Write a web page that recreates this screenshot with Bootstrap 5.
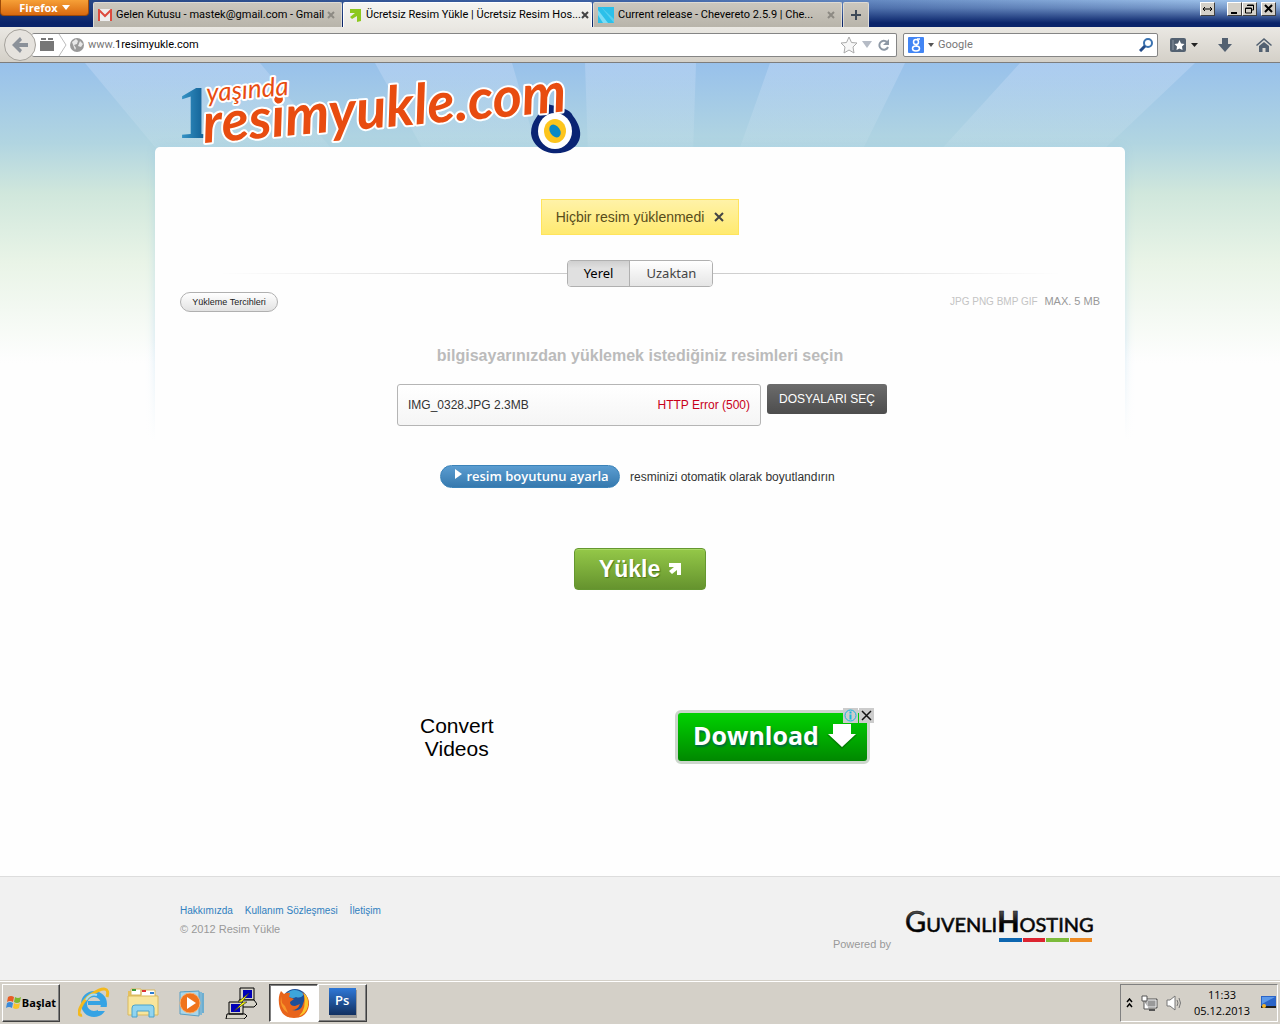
<!DOCTYPE html>
<html lang="tr">
<head>
<meta charset="utf-8">
<meta name="viewport" content="width=device-width, initial-scale=1">
<title>Ücretsiz Resim Yükle</title>
<link href="https://cdn.jsdelivr.net/npm/bootstrap@5.3.0/dist/css/bootstrap.min.css" rel="stylesheet">
<style>
body{font-family:"Liberation Sans",sans-serif;font-size:12px;line-height:18px;color:#333;background:#fefefe}
.ui{font-family:Roboto,"DejaVu Sans",sans-serif;font-size:11px;line-height:16px;color:#000}
svg{display:block;flex:none}
button{font-family:inherit}
/* browser window */
.titlebar{height:27px;background:linear-gradient(to bottom,rgba(10,36,106,0) 0,rgba(10,36,106,.25) 30%,#0a246a 85%),linear-gradient(to right,#23427f,#4166a8 50%,#a6caf0)}
.fx-btn{width:89px;height:16px;background:linear-gradient(#f6a037,#d9690f);border:1px solid #9c4a0a;border-top:0;border-radius:0 0 4px 4px;color:#fff;font-family:"Open Sans",sans-serif;font-weight:700;font-size:11px;line-height:14px;padding:0}
.tabitem{flex:0 1 249px;min-width:0;height:25px;background:linear-gradient(#cbc7be,#b8b4aa);border:1px solid #dedbd4;border-bottom:0;border-radius:2px 2px 0 0;padding:0 6px 0 4px}
.tabitem.sel{background:linear-gradient(#f5f4f1,#eae8e3);border-color:#fff}
.tabitem.plus{flex:0 0 26px;padding:0}
.tabitem button,.bare{border:0;background:none;padding:0;color:inherit}
.wbtn{width:15px;height:14px;background:#d4d0c8;border:1px solid;border-color:#fff #404040 #404040 #fff;padding:0}
.toolbar{height:36px;background:linear-gradient(#eae8e3,#d4d0c8);border-bottom:1px solid #7d7d7d}
.field{height:24px;background:#fff;border:1px solid #858585;border-radius:2px}
.field input{border:0;outline:0;background:none;padding:0;min-width:0;color:#000}
.field input::placeholder{color:#777;opacity:1}
.urlfield{border-left:0;margin-left:-4px;padding-left:8px}
.searchfield{width:255px}
.backbtn{width:32px;height:32px;border-radius:50%;border:1px solid #a5a29c;background:#e6e3de;padding:0;z-index:1}
/* page */
.sky{background:linear-gradient(#98c1eb 0,#b1d5e1 80px,#d0e7dc 130px,#e9f4e7 200px,#fefefe 300px)}
.rays{left:0;top:0;width:100%;height:90px}
.wrapx{width:970px;max-width:100%}
.head{height:84px;padding-left:25px}
.head svg,.host svg{overflow:visible}
.panel{background:#fefefe;border-radius:5px 5px 0 0;padding:52px 25px 0;height:729px;position:relative}
.panel::before{content:"";position:absolute;z-index:0;inset:0 0 auto;height:300px;border-radius:5px;box-shadow:0 0 8px rgba(150,200,230,.45)}
.panel::after{content:"";position:absolute;left:-10px;right:-10px;top:190px;height:130px;background:linear-gradient(rgba(254,254,254,0),#fefefe 80%)}
.panel>*{position:relative;z-index:1}
.notice{height:36px;background:linear-gradient(#fff2a8,#ffea70);border:1px solid #ffe45c;color:#574c1b;font-size:14px;padding:0 14px;gap:10px}
.rule{height:1px;flex:1}
.rule.l{background:linear-gradient(to right,rgba(200,200,200,0) 10%,#ccc)}
.rule.r{background:linear-gradient(to left,rgba(200,200,200,0) 10%,#ccc)}
.seg{height:27px;border:1px solid #b0b0b0;border-radius:4px;overflow:hidden;font:500 13px "Noto Sans",sans-serif;color:#444}
.seg button{border:0;padding:0 16px 2px;background:linear-gradient(#fff,#e5e5e5);color:inherit}
.seg button.on{background:linear-gradient(#cfcfcf,#e0e0e0 30%);color:#000;border-right:1px solid #b0b0b0}
.pref{min-width:98px;height:20px;border:1px solid #b0b0b0;border-radius:10px;background:linear-gradient(#fff,#e2e2e2);font-size:9px;line-height:18px;padding:0;color:#222}
.options{margin-top:5px}
.formats{font-size:10px;color:#c4c4c4}
.formats span{color:#999;margin-left:4px;font-size:11px}
h1{font-size:16px;line-height:20px;font-weight:700;color:#bbb}
.queue{width:364px;height:42px;border:1px solid #b5b5b5;border-radius:3px;background:linear-gradient(#fff,#f5f5f5);padding:0 10px}
.pick{width:120px;height:30px;border:0;border-radius:3px;background:linear-gradient(#6c6c6c,#4d4d4d);color:#fff;padding:0}
.resize{width:180px;height:23px;border:1px solid #3b83b9;border-radius:12px;background:linear-gradient(#5b9dd1,#3679ae);color:#fff;font:600 13px "Open Sans",sans-serif;padding:0 0 2px 4px}
.resize svg{margin-bottom:4px}
.resizenote{width:210px}
.send{width:132px;height:42px;border:1px solid #659730;border-radius:4px;background:linear-gradient(#94c848,#65932e);box-shadow:inset 0 1px #a9d866;color:#fff;font-size:23px;font-weight:700;text-shadow:1px 1px 1px #4d7a1c;padding:0}
.adbox{width:468px;height:60px;padding-left:14px}
.adtext{font-size:21px;line-height:23px;color:#000;text-align:center;padding-top:6px}
.dl{width:195px;height:54px;margin:2px 4px 0 0;border:3px solid #ccd6cc;border-radius:6px;background:linear-gradient(#00d200,#008800);color:#fff;font:700 25px "Open Sans",sans-serif;text-shadow:1px 2px 2px #064;padding:0 10px 0 15px;text-decoration:none}
.adctl{right:0;top:0;gap:1px}
.adctl button{width:15px;height:15px;background:#ccc;border:0;padding:1px}
.foot{background:#f1f1f1;border-top:1px solid #ddd;height:104px;font-size:11px;color:#999}
.foot a{color:#2f7fc0;text-decoration:none}
.foot nav{gap:12px;font-size:10px}
.foot .wrapx{padding:25px 25px 0}
.host{padding:3px 3px 0 0}
/* taskbar */
.taskbar{height:44px;background:#d4d0c8;border-top:1px solid #d4d0c8;box-shadow:inset 0 1px #fff;padding:2px}
.tb{border:1px solid;border-color:#fff #404040 #404040 #fff;box-shadow:inset -1px -1px #808080;background:#d4d0c8;width:49px;height:38px;padding:0}
.tb.down{background:#fff;border-color:#404040 #fff #fff #404040;box-shadow:inset 1px 1px #808080;margin-left:12px}
.startb{width:58px;font-family:"Open Sans",sans-serif;font-weight:700;font-size:11px}
.launch{gap:17px;margin-left:18px}
.tray{border:1px solid;border-color:#808080 #fff #fff #808080;height:38px;width:158px;padding:0 1px 0 5px}
.clock{font-family:"Open Sans",sans-serif}
</style>
<script src="https://cdn.jsdelivr.net/npm/bootstrap@5.3.0/dist/js/bootstrap.bundle.min.js"></script>
</head>
<body class="d-flex flex-column min-vh-100">
<header class="ui">
  <div class="titlebar d-flex">
    <button class="fx-btn d-flex align-items-center justify-content-center gap-1 me-1">Firefox <svg width="8" height="5"><path d="M0 0h8L4 5z" fill="#fff"/></svg></button>
    <div class="d-flex flex-grow-1 align-items-end" style="gap:1px">
      <div class="tabitem d-flex align-items-center">
        <svg width="14" height="12" class="me-1"><rect width="14" height="12" fill="#eee"/><path d="M1 12V1l6 6 6-6v11" fill="none" stroke="#dd4b3e" stroke-width="2"/></svg>
        <span class="text-nowrap flex-grow-1">Gelen Kutusu - mastek@gmail.com - Gmail</span>
        <button aria-label="Kapat"><svg width="8" height="8"><path d="M1 1l6 6M7 1L1 7" stroke="#8d8a83" stroke-width="2"/></svg></button>
      </div>
      <div class="tabitem sel d-flex align-items-center">
        <svg width="14" height="14" class="me-1"><path d="M2 1h11v12l-4 1V8l-5 3-2-2 5-4H2z" fill="#8cc81e"/></svg>
        <span class="text-nowrap flex-grow-1">Ücretsiz Resim Yükle | Ücretsiz Resim Hos...</span>
        <button aria-label="Kapat"><svg width="8" height="8"><path d="M1 1l6 6M7 1L1 7" stroke="#444" stroke-width="2"/></svg></button>
      </div>
      <div class="tabitem d-flex align-items-center">
        <svg width="16" height="16" class="me-1"><path d="M0 0h16v16H0z" fill="#2bc0ea"/><path d="M0 3l10 13H5L0 8z" fill="#7cdcf5"/><path d="M3 0l13 12v4z" fill="#55cff0"/></svg>
        <span class="text-nowrap flex-grow-1">Current release - Chevereto 2.5.9 | Che...</span>
        <button aria-label="Kapat"><svg width="8" height="8"><path d="M1 1l6 6M7 1L1 7" stroke="#8d8a83" stroke-width="2"/></svg></button>
      </div>
      <div class="tabitem plus d-flex align-items-center justify-content-center"><button aria-label="Yeni sekme"><svg width="10" height="10"><path d="M5 0v10M0 5h10" stroke="#3e4a58" stroke-width="2"/></svg></button></div>
    </div>
    <div class="d-flex px-1 ms-2 align-items-start" style="padding-top:2px">
      <button class="wbtn me-2" aria-label="Genişlet"><svg width="13" height="12"><path d="M2 6h9M4 4L2 6l2 2M9 4l2 2-2 2" stroke="#000" fill="none"/></svg></button>
      <button class="wbtn ms-1" aria-label="Küçült"><svg width="13" height="12"><path d="M3 9h6v2H3z"/></svg></button>
      <button class="wbtn" aria-label="Geri yükle"><svg width="13" height="12"><path d="M4.500 2h6v5H8M2.500 5h6v5h-6zM4 2.500h7M2 5.500h7" fill="none" stroke="#000"/></svg></button>
      <button class="wbtn ms-1" aria-label="Kapat"><svg width="13" height="12"><path d="M3 2l7 7M10 2L3 9" stroke="#000" stroke-width="2"/></svg></button>
    </div>
  </div>
  <div class="toolbar d-flex align-items-center px-1">
    <button class="backbtn d-flex align-items-center justify-content-center" aria-label="Geri"><svg width="18" height="18"><path d="M9 1L1 9l8 8 2-3-3-3h9V7H8l3-3z" fill="#8b9199"/></svg></button>
    <div class="field urlfield d-flex align-items-center flex-grow-1">
      <svg width="14" height="14"><path d="M0 3h14v10H0zM1 0h5v2H1zM8 0h5v2H8z" fill="#777"/></svg>
      <svg width="12" height="22" class="ms-1"><path d="M1 0l7 11-7 11" fill="none" stroke="#bbb"/></svg>
      <svg width="14" height="14" class="me-1"><circle cx="7" cy="7" r="7" fill="#999"/><path d="M2 4l4-3 2 2-1 3-3 1 2 3-1 2zM10 3l3 3-2 3-3-1z" fill="#e8e8e8"/></svg>
      <label for="url" style="color:#777">www.</label><input id="url" class="flex-grow-1" value="1resimyukle.com">
      <svg width="18" height="18"><path d="M9 1l2.500 5.500L17 7l-4 4 1 6-5-3-5 3 1-6-4-4 5.500-.5z" fill="#f7f7f7" stroke="#aaa"/></svg>
      <svg width="10" height="7" class="mx-1"><path d="M0 0h10L5 7z" fill="#b5bbc5"/></svg>
      <svg width="16" height="14" class="me-1"><path d="M11 4A4.500 4.500 0 1 0 12 9" fill="none" stroke="#8d98a5" stroke-width="2"/><path d="M13 1v6H7z" fill="#8d98a5"/></svg>
    </div>
    <form class="field searchfield d-flex align-items-center px-1" style="margin-left:6px">
      <svg width="16" height="16"><rect width="16" height="16" rx="1" fill="#4285f4"/><g fill="none" stroke="#fff" stroke-width="1.500"><circle cx="8" cy="5" r="2.500"/><ellipse cx="8" cy="11.500" rx="3.500" ry="2.500"/><path d="M9 2h3M8 7.500l1 2"/></g></svg>
      <svg width="6" height="4" class="ms-1 me-1"><path d="M0 0h6L3 4z" fill="#555"/></svg>
      <input aria-label="Google ile ara" placeholder="Google" class="flex-grow-1">
      <svg width="14" height="14"><circle cx="9" cy="5" r="4" fill="none" stroke="#3a72b0" stroke-width="2"/><path d="M6 8l-5 5" stroke="#234b88" stroke-width="3"/></svg>
    </form>
    <button class="bare d-flex align-items-center ms-2 ps-1" aria-label="Yer imleri"><svg width="28" height="14"><rect width="16" height="14" rx="2" fill="#536171"/><path d="M3 2v10" stroke="#8a95a2"/><path d="M9.500 2l1.500 3.500 3.500.5-2.500 2.500.5 3.500-3-1.500-3 1.500.5-3.500L4.500 6 8 5.500z" fill="#fff"/><path d="M21 5h7l-3.500 4z" fill="#222"/></svg></button>
    <button class="bare ms-3" aria-label="İndirilenler"><svg width="14" height="14" class="ms-1"><path d="M4 0h6v6h4l-7 8-7-8h4z" fill="#536171"/></svg></button>
    <button class="bare ms-4 me-1" aria-label="Ana sayfa"><svg width="16" height="14"><path d="M8 0l8 7-1 1-7-6-7 6-1-1zM3 8l5-4 5 4v6H9.500v-4h-3v4H3z" fill="#536171"/></svg></button>
  </div>
</header>

<main class="sky position-relative flex-grow-1">
  <svg class="rays position-absolute" viewBox="0 0 1280 90" preserveAspectRatio="none" aria-hidden="true">
    <defs><linearGradient id="ray" x2="0" y2="1"><stop stop-color="#c9dcf8" stop-opacity=".4"/><stop offset="1" stop-color="#d4e8ee" stop-opacity=".15"/></linearGradient></defs>
    <g fill="url(#ray)"><path d="M85 0h175l75 90H160z"/><path d="M375 0h137l26 90H425z"/><path d="M585 0h111l-3 90H588z"/><path d="M770 0h135l-44 90H738z"/><path d="M1020 0h175l-95 90H938z"/></g>
  </svg>
  <div class="wrapx mx-auto position-relative">
    <div class="head position-relative z-1">
      <svg width="405" height="100" role="img" aria-label="1 yaşında resimyukle.com">
        <defs><linearGradient id="one"><stop stop-color="#3ea0d2"/><stop offset="1" stop-color="#034a80"/></linearGradient></defs>
        <text x="-4" y="75" font-family="Liberation Serif" font-weight="700" font-size="76" fill="url(#one)">1</text>
        <path d="M356 55C362 47 361 38 371 42C380 44 390 46 393 53C405 68 402 84 385 89C368 94 352 84 351 70C351 64 353 59 356 55Z" fill="#0a2474"/>
        <ellipse cx="375" cy="68" rx="17" ry="18" fill="#fff"/><ellipse cx="375" cy="68" rx="11" ry="12" fill="#fdc51d"/><ellipse cx="375" cy="68" rx="5" ry="7" transform="rotate(-35 375 68)" fill="#0a89c5"/>
        <g font-family="Lato" font-style="italic" fill="#e84c10" stroke="#fff" stroke-width="4" stroke-linejoin="round" paint-order="stroke">
          <text x="24" y="80" font-size="56" font-weight="700" transform="rotate(-5 24 80)">resimyukle.com</text>
          <text x="27" y="39" font-size="26" transform="rotate(-5 27 39)">yaşında</text>
        </g>
      </svg>
    </div>
    <section class="panel">
      <div class="d-flex justify-content-center">
        <div class="notice d-flex align-items-center" role="alert">Hiçbir resim yüklenmedi<button class="bare" aria-label="Kapat"><svg width="10" height="10"><path d="M1 1l8 8M9 1L1 9" stroke="#444" stroke-width="2"/></svg></button></div>
      </div>
      <div class="d-flex align-items-center" style="margin-top:25px">
        <span class="rule l"></span><div class="seg d-flex"><button class="on">Yerel</button><button>Uzaktan</button></div><span class="rule r"></span>
      </div>
      <div class="options d-flex justify-content-between">
        <button class="pref">Yükleme Tercihleri</button>
        <div class="formats">JPG PNG BMP GIF <span>MAX. 5 MB</span></div>
      </div>
      <h1 class="text-center mb-0" style="margin-top:34px">bilgisayarınızdan yüklemek istediğiniz resimleri seçin</h1>
      <div class="d-flex justify-content-center align-items-start ps-1" style="gap:6px;margin-top:18px">
        <div class="queue d-flex justify-content-between align-items-center"><span>IMG_0328.JPG 2.3MB</span><span style="color:#c8001a">HTTP Error (500)</span></div>
        <button class="pick">DOSYALARI SEÇ</button>
      </div>
      <div class="d-flex justify-content-center align-items-center" style="gap:10px;margin-top:39px">
        <button class="resize d-flex align-items-center justify-content-center gap-1"><svg width="7" height="10"><path d="M0 0l7 5-7 5z" fill="#fff"/></svg>resim boyutunu ayarla</button>
        <span class="resizenote">resminizi otomatik olarak boyutlandırın</span>
      </div>
      <div class="d-flex justify-content-center" style="margin-top:60px">
        <button class="send d-flex align-items-center justify-content-center gap-2">Yükle<svg width="13" height="14"><path d="M1 1h12v12H9V8l-5 4-3-3 5-4H1z" fill="#fff"/></svg></button>
      </div>
      <div class="adbox d-flex justify-content-between mx-auto position-relative" style="margin-top:118px">
        <div class="adtext">Convert<br>Videos</div>
        <a href="#" class="dl d-flex align-items-center justify-content-between"><span class="pb-1">Download</span><svg width="30" height="26"><path d="M6 1h18v10h6L15 25 0 11h6z" fill="#075c07" opacity=".5"/><path d="M6 0h18v10h5L15 23 1 10h5z" fill="#fff"/></svg></a>
        <div class="adctl d-flex position-absolute">
          <button aria-label="Reklam bilgisi"><svg width="13" height="13"><circle cx="6.500" cy="6.500" r="5.500" fill="none" stroke="#18b5dc"/><path d="M6.500 5.500v5M6.500 2.500v2" stroke="#18b5dc" stroke-width="2"/></svg></button>
          <button aria-label="Reklamı kapat"><svg width="13" height="13"><path d="M2 2l9 9M11 2l-9 9" stroke="#111" stroke-width="1.500"/></svg></button>
        </div>
      </div>
    </section>
  </div>
</main>

<footer class="foot">
  <div class="wrapx mx-auto d-flex justify-content-between">
    <div><nav class="d-flex"><a href="#">Hakkımızda</a><a href="#">Kullanım Sözleşmesi</a><a href="#">İletişim</a></nav>© 2012 Resim Yükle</div>
    <div class="host d-flex align-items-end">
      <span>Powered by</span>
      <svg width="190" height="44" class="ms-3 mb-1" role="img" aria-label="GuvenliHosting">
        <defs><linearGradient id="ink" x2="0" y2="1"><stop offset=".2" stop-color="#555"/><stop offset=".6" stop-color="#000"/></linearGradient></defs>
        <text x="-2" y="27" font-family="Lato" font-size="20" fill="url(#ink)" stroke="#111" stroke-width=".6"><tspan font-size="29">G</tspan>UVENLI<tspan font-size="29" font-weight="700">H</tspan>OSTING</text>
        <path d="M92 33h23v4H92z" fill="#0d66b0"/><path d="M116 33h22v4h-22z" fill="#dc2430"/><path d="M139 33h23v4h-23z" fill="#7cbb3b"/><path d="M163 33h22v4h-22z" fill="#ee8b24"/>
      </svg>
    </div>
  </div>
</footer>

<div class="taskbar ui d-flex align-items-center">
  <button class="tb startb d-flex align-items-center justify-content-center"><svg width="16" height="15"><path d="M2 2q3-2 6 0L7 7Q4 5 1 7z" fill="#e85c24"/><path d="M9 2q3 2 6 0l-1 5q-3 2-6 0z" fill="#7db82c"/><path d="M1 8q3-2 6 0l-1 5Q3 11 0 13z" fill="#3b8ad8"/><path d="M8 8q3 2 6 0l-1 5q-3 2-6 0z" fill="#f8c32c"/></svg>Başlat</button>
  <div class="launch d-flex align-items-center">
    <button class="bare" aria-label="Internet Explorer"><svg width="32" height="32"><circle cx="16" cy="17" r="10" fill="none" stroke="#36a3e4" stroke-width="6"/><path d="M10 16h18" stroke="#36a3e4" stroke-width="4"/><path d="M19 20h12v4H20z" fill="#d4d0c8"/><path d="M4 28C-3 30 3 14 14 7S32 0 29 10" fill="none" stroke="#f3b91f" stroke-width="3"/><path d="M8 13q4-7 11-5" stroke="#a6ddf8" stroke-width="2" fill="none"/></svg></button>
    <button class="bare" aria-label="Dosya gezgini"><svg width="32" height="32"><path d="M1 4h10l2 3h15l3 3v18H1z" fill="#e6c15e"/><path d="M4 2h10v6H4zM14 3h14v8H14z" fill="#fff" stroke="#d9b95f"/><path d="M5 3h4" stroke="#3a9a38" stroke-width="2"/><path d="M15 4h4" stroke="#d33" stroke-width="2"/><path d="M23 6h4" stroke="#2d7dd2" stroke-width="2"/><path d="M1 9h30v19H1z" fill="#f8e59c" stroke="#d9b95f"/><path d="M5 30V21q0-3 3-3h16q3 0 3 3v9h-5v-6H10v6z" fill="#90d4f0" stroke="#4aa3cc"/></svg></button>
    <button class="bare" aria-label="Media Player"><svg width="32" height="32"><path d="M8 4l18 1v23l-18-2z" fill="#7eb7d5"/><path d="M4 5l19-1v25L4 27z" fill="#a9d6ea" stroke="#5a9fc2"/><path d="M26 6h2v20h-2z" fill="#6daed0"/><circle cx="14" cy="16" r="10" fill="#f0741c" stroke="#fbb06e"/><path d="M11 10v12l9-6z" fill="#fff"/></svg></button>
    <button class="bare" aria-label="PuTTY"><svg width="32" height="32"><g stroke="#000" fill="#d6d3c8"><path d="M15 1h14v12H15z"/><path d="M14 13h15l3 4-3 3H15z"/><path d="M4 15h14v12H4zM2 27h18l2 2-3 3H1z"/></g><path d="M18 3h9v8h-9zM6 17h9v8H6z" fill="#0000b8"/><path d="M24 6L13 15h5L9 24l13-9h-5z" fill="#ff0" stroke="#333" stroke-width=".7"/></svg></button>
  </div>
  <button class="tb down d-flex align-items-center justify-content-center" aria-label="Firefox"><svg width="32" height="32"><circle cx="17" cy="15" r="13" fill="#1d4f99"/><path d="M8 7q8-8 18 0-3 5-8 3-5 3-10-3z" fill="#3da5dc"/><path d="M3 4l3 3q3-2 6-1l-1 4 5 2-4 3q0 4 5 4l5-2q-2 6-8 6 9 2 11-6 3-7-1-12 8 5 7 13-2 13-15 13T1 17Q0 9 3 4z" fill="#e8641b"/><path d="M26 6q5 5 4 13-2 8-9 10 8-7 5-23z" fill="#fbc62b"/><path d="M3 9q-2 12 7 17l-3-7-3-3z" fill="#f7962a"/></svg></button>
  <button class="tb d-flex align-items-center justify-content-center" aria-label="Photoshop"><svg width="32" height="32"><defs><linearGradient id="psg" x2="0" y2="1"><stop stop-color="#2f78d8"/><stop offset="1" stop-color="#12305f"/></linearGradient></defs><path d="M3 3h27v28H3z" fill="#777" opacity=".6"/><path d="M2 1h27v27H2z" fill="url(#psg)"/><text x="8" y="18" font-family="Open Sans" font-weight="600" font-size="13" fill="#fff">Ps</text></svg></button>
  <div class="tray d-flex align-items-center ms-auto">
    <svg width="7" height="10"><path d="M1 4l2.500-3L6 4M1 9l2.500-3L6 9" fill="none" stroke="#000" stroke-width="1.500"/></svg>
    <svg width="17" height="16" class="ms-2 me-2"><path d="M5 4h11v9H5z" fill="#999" stroke="#555"/><path d="M6 5h9v7H6z" fill="none" stroke="#eee"/><path d="M1 1h5v5H1zM3 6v8h5" fill="#fff" stroke="#555"/><path d="M8 15h6" stroke="#555" stroke-width="2"/></svg>
    <svg width="17" height="16"><path d="M1 5h3l5-4v14l-5-4H1z" fill="#fff" stroke="#777"/><path d="M11 5q2 3 0 6M13 3q3 5 0 10" fill="none" stroke="#777"/></svg>
    <div class="clock text-center flex-grow-1">11:33<br>05.12.2013</div>
    <svg width="15" height="13"><path d="M0 0h15v12H0z" fill="#2b65c8"/><path d="M1 1h13L1 8z" fill="#5c99ea"/><path d="M0 10h15v2H0z" fill="#222"/><circle cx="3" cy="10" r="2" fill="#f5b52a"/></svg>
  </div>
</div>
</body>
</html>
